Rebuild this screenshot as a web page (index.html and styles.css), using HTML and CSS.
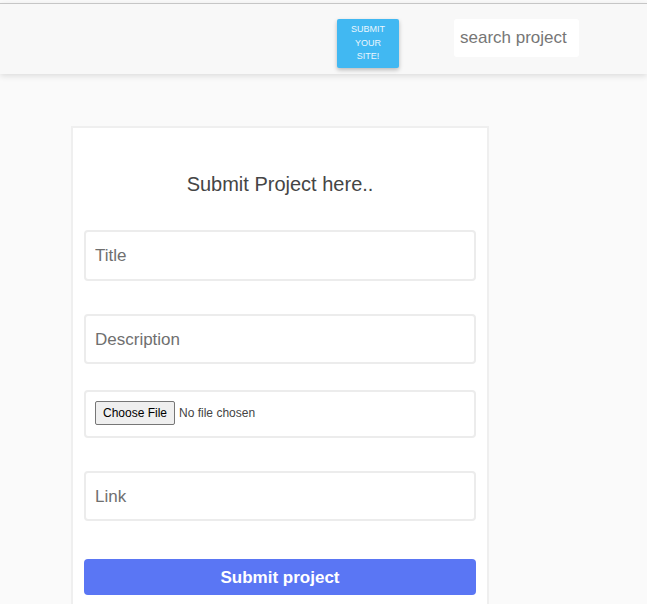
FILE: index.html
```html
<!DOCTYPE html>
<html>
<head>
<meta charset="utf-8">
<title>Submit Project</title>
<link rel="stylesheet" href="styles.css">
</head>
<body>
<header class="topbar">
  <button class="site-btn" type="button">Submit your site!</button>
  <input class="search" type="text" placeholder="search project">
</header>
<main class="page">
  <form class="card">
    <h2 class="card-title">Submit Project here..</h2>
    <input class="field f-title" type="text" placeholder="Title">
    <input class="field f-desc" type="text" placeholder="Description">
    <input class="field-file" type="file">
    <input class="field f-link" type="text" placeholder="Link">
    <button class="submit" type="button">Submit project</button>
  </form>
</main>
</body>
</html>
```
FILE: styles.css
```css
* { box-sizing: border-box; }
html, body { margin: 0; padding: 0; }
body {
  background: #fafafa;
  font-family: "Liberation Sans", Arial, sans-serif;
  height: 604px;
  overflow: hidden;
}
.topbar {
  margin-top: 3px;
  border-top: 1px solid #c6c6c6;
  height: 71px;
  background: #f8f8f8;
  box-shadow: 0 2px 6px rgba(0,0,0,0.12);
  display: flex;
  align-items: flex-start;
  padding: 15px 0 0 337px;
  position: relative;
  z-index: 1;
}
.site-btn {
  width: 62px;
  height: 49px;
  margin: 0;
  padding: 0 12px 0;
  border: none;
  border-radius: 2px;
  background: #41b8f2;
  color: #eaf6fd;
  font-family: "Liberation Sans", Arial, sans-serif;
  font-size: 9px;
  line-height: 13.5px;
  text-transform: uppercase;
  box-shadow: 0 2px 4px rgba(0,0,0,0.25);
}
.search {
  margin-left: 55px;
  width: 125px;
  height: 38px;
  border: none;
  border-radius: 3px;
  background: #fff;
  padding: 0 0 0 6px;
  font-family: "Liberation Sans", Arial, sans-serif;
  font-size: 17px;
  color: #333;
  outline: none;
}
.search::placeholder { color: #767676; }
.page {
  padding: 52px 0 0 71px;
}
.card {
  width: 418px;
  height: 478px;
  background: #fff;
  border: 2px solid #efefef;
  border-bottom: none;
  padding: 44px 11px 0;
  display: flex;
  flex-direction: column;
}
.card-title {
  margin: 0 0 34px;
  font-size: 20px;
  line-height: 24px;
  font-weight: normal;
  text-align: center;
  color: #454545;
}
.field {
  height: 50px;
  border: 2px solid #ececec;
  border-radius: 4px;
  padding: 1px 9px 0;
  font-family: "Liberation Sans", Arial, sans-serif;
  font-size: 17px;
  color: #333;
  outline: none;
  background: #fff;
}
.field::placeholder { color: #6f6f6f; }
.f-title { height: 51px; padding-top: 0; margin-bottom: 33px; }
.f-desc { margin-bottom: 26px; }
.f-link { margin-bottom: 38px; }
.field-file {
  height: 48px;
  border: 2px solid #ececec;
  border-radius: 4px;
  padding: 9px 9px;
  margin-bottom: 33px;
  font-family: "Liberation Sans", Arial, sans-serif;
  font-size: 12px;
  color: #444;
  background: #fff;
}
.field-file::file-selector-button {
  height: 24px;
  padding: 0 7px;
  margin-right: 4px;
  border: 1px solid #767676;
  border-radius: 2px;
  background: #efefef;
  color: #000;
  font-family: "Liberation Sans", Arial, sans-serif;
  font-size: 12px;
}
.submit {
  height: 36px;
  border: none;
  border-radius: 4px;
  background: #5a76f4;
  color: #fff;
  padding-top: 2px;
  font-family: "Liberation Sans", Arial, sans-serif;
  font-size: 17px;
  font-weight: bold;
}
```
